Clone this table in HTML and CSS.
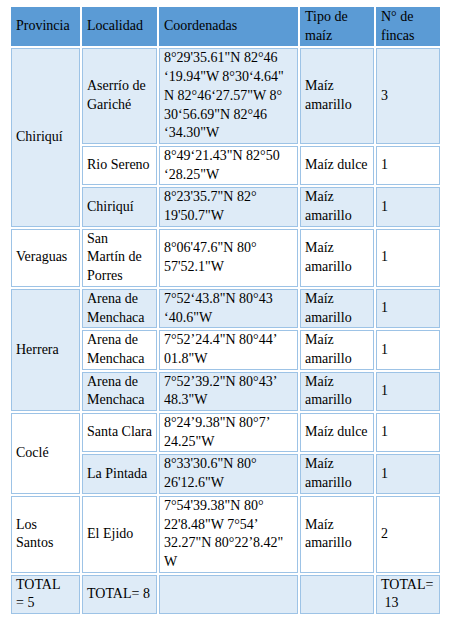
FILE: index.html
```html
<!DOCTYPE html>
<html lang="es">
<head>
<meta charset="utf-8">
<title>Fincas de maíz</title>
<link rel="stylesheet" href="styles.css">
</head>
<body>
<table class="data">
  <thead>
    <tr>
      <th class="c1">Provincia</th>
      <th class="c2">Localidad</th>
      <th class="c3">Coordenadas</th>
      <th class="c4">Tipo de maíz</th>
      <th class="c5">N° de fincas</th>
    </tr>
  </thead>
  <tbody>
    <tr class="band">
      <td rowspan="3">Chiriquí</td>
      <td>Aserrío de Gariché</td>
      <td>8°29'35.61"N 82°46 ‘19.94"W 8°30‘4.64" N 82°46‘27.57"W 8° 30‘56.69"N 82°46 ‘34.30"W</td>
      <td>Maíz amarillo</td>
      <td>3</td>
    </tr>
    <tr>
      <td>Rio Sereno</td>
      <td>8°49‘21.43"N 82°50 ‘28.25"W</td>
      <td>Maíz dulce</td>
      <td>1</td>
    </tr>
    <tr class="band">
      <td>Chiriquí</td>
      <td>8°23'35.7"N 82° 19'50.7"W</td>
      <td>Maíz amarillo</td>
      <td>1</td>
    </tr>
    <tr>
      <td>Veraguas</td>
      <td>San<br>Martín de Porres</td>
      <td>8°06'47.6"N 80° 57'52.1"W</td>
      <td>Maíz amarillo</td>
      <td>1</td>
    </tr>
    <tr class="band">
      <td rowspan="3">Herrera</td>
      <td>Arena de Menchaca</td>
      <td>7°52‘43.8"N 80°43 ‘40.6"W</td>
      <td>Maíz amarillo</td>
      <td>1</td>
    </tr>
    <tr>
      <td>Arena de Menchaca</td>
      <td>7°52’24.4"N 80°44’ 01.8"W</td>
      <td>Maíz amarillo</td>
      <td>1</td>
    </tr>
    <tr class="band">
      <td>Arena de Menchaca</td>
      <td>7°52’39.2"N 80°43’ 48.3"W</td>
      <td>Maíz amarillo</td>
      <td>1</td>
    </tr>
    <tr>
      <td rowspan="2">Coclé</td>
      <td>Santa Clara</td>
      <td>8°24’9.38"N 80°7’ 24.25"W</td>
      <td>Maíz dulce</td>
      <td>1</td>
    </tr>
    <tr class="band">
      <td>La Pintada</td>
      <td>8°33'30.6"N 80° 26'12.6"W</td>
      <td>Maíz amarillo</td>
      <td>1</td>
    </tr>
    <tr>
      <td>Los Santos</td>
      <td>El Ejido</td>
      <td>7°54'39.38"N 80° 22'8.48"W 7°54’ 32.27"N 80°22’8.42" W</td>
      <td>Maíz amarillo</td>
      <td>2</td>
    </tr>
    <tr class="band">
      <td>TOTAL =&nbsp;5</td>
      <td>TOTAL= 8</td>
      <td></td>
      <td></td>
      <td>TOTAL= &nbsp;13</td>
    </tr>
  </tbody>
</table>
</body>
</html>
```
FILE: styles.css
```css
html, body {
  margin: 0;
  padding: 0;
  background: #ffffff;
}

.data {
  margin: 5px 0 0 9px;
  width: 433px;
  table-layout: fixed;
  border-collapse: separate;
  border-spacing: 2px;
  font-family: "Liberation Serif", "Times New Roman", serif;
  font-size: 14px;
  line-height: 18.7px;
  color: #000000;
}

.data th,
.data td {
  box-sizing: border-box;
  padding: 0 4px;
  text-align: left;
  vertical-align: middle;
  font-weight: normal;
  border: 1px solid #9dc3e6;
  background: #ffffff;
}

.data th {
  background: #5b9bd5;
  border-color: #5b9bd5;
}

.data tr.band td {
  background: #deebf7;
}

.c1 { width: 69px; }
.c2 { width: 75px; }
.c3 { width: 139px; }
.c4 { width: 74px; }
.c5 { width: 64px; }
```
